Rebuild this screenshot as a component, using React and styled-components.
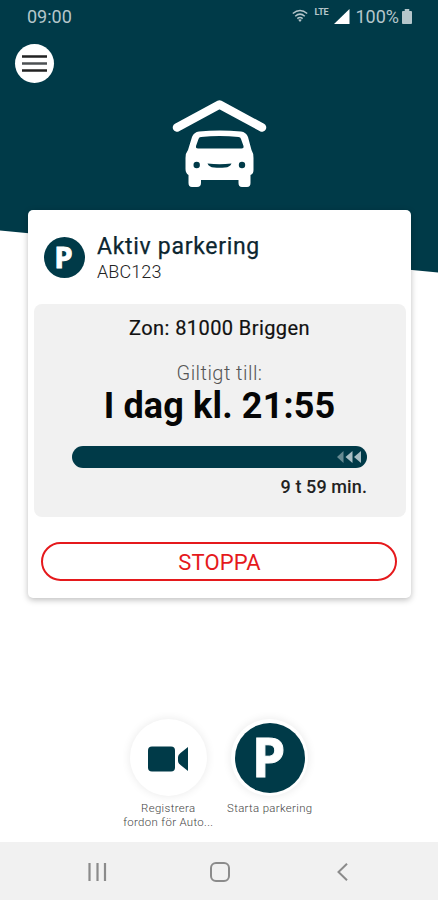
import styled, { createGlobalStyle } from "styled-components";

const GlobalStyle = createGlobalStyle`
    * {
        box-sizing: border-box;
    }
    body {
        margin: 0;
        background: #fff;
        font-family: Roboto, "Liberation Sans", sans-serif;
    }
    svg {
        display: block;
    }
`

const Screen = styled.div`
    display: flex;
    flex-direction: column;
    align-items: center;
    width: 438px;
    height: 900px;
    overflow: hidden;
    background: #fff;
`

const Hero = styled.header`
    flex: none;
    width: 100%;
    height: 273px;
    background: #003a48;
    clip-path: polygon(0 0, 100% 0, 100% 272.5px, 0 230.5px);
`

const StatusBar = styled.div`
    display: flex;
    align-items: center;
    justify-content: space-between;
    height: 32px;
    padding: 0 26px 0 27px;
    color: #b5c6cb;
    font-size: 18px;
`

const StatusIcons = styled.div`
    display: flex;
    align-items: center;
`

const Lte = styled.span`
    margin: -9px 6px 0 7px;
    font-size: 9px;
    font-weight: 700;
    line-height: 10px;
    letter-spacing: -0.2px;
`

const Percent = styled.span`
    margin: 0 3px 0 5px;
`

const MenuButton = styled.button`
    display: flex;
    align-items: center;
    justify-content: center;
    width: 39px;
    height: 39px;
    margin: 12px 0 0 15px;
    padding: 0;
    border: 0;
    border-radius: 50%;
    background: #fff;
`

const CarLogo = styled.svg`
    margin: 15px 0 0 171px;
`

const Card = styled.main`
    flex: none;
    position: relative;
    width: 383px;
    height: 388px;
    margin: -63px 0 0 1px;
    padding: 0 5px 0 6px;
    border-radius: 5px;
    background: #fff;
    box-shadow: 0 2px 6px rgba(0, 0, 0, 0.26);
`

const CardHeader = styled.div`
    display: flex;
    align-items: center;
    gap: 12px;
    height: 94px;
    padding: 0 10px;
`

const Title = styled.h1`
    margin: 1px 0 0;
    color: #0c2630;
    font-size: 23px;
    font-weight: 400;
    line-height: 27px;
    letter-spacing: 0.7px;
    white-space: nowrap;
    -webkit-text-stroke: 0.25px #0c2630;
`

const Plate = styled.p`
    margin: 0;
    color: #222;
    font-size: 18px;
    font-weight: 300;
    line-height: 23px;
    letter-spacing: 0.1px;
`

const Details = styled.section`
    height: 213px;
    padding: 12px 39px 0 38px;
    border-radius: 8px;
    background: #f1f1f1;
    text-align: center;
    white-space: nowrap;
`

const Zone = styled.p`
    margin: 0;
    color: #111;
    font-size: 20px;
    line-height: 24px;
    letter-spacing: 0.42px;
    -webkit-text-stroke: 0.2px #111;
`

const ValidLabel = styled.p`
    margin: 21px 0 0;
    color: #555;
    font-size: 20px;
    font-weight: 300;
    line-height: 24px;
    letter-spacing: 0.45px;
`

const ValidTime = styled.p`
    margin: 0;
    color: #060606;
    font-size: 36px;
    font-weight: 700;
    line-height: 42px;
    letter-spacing: 0.15px;
`

const Progress = styled.div`
    display: flex;
    align-items: center;
    justify-content: flex-end;
    height: 22px;
    margin-top: 19px;
    padding-right: 5px;
    border-radius: 11px;
    background: #003a48;
`

const TimeLeft = styled.p`
    margin: 8px 0 0;
    color: #222;
    font-size: 18px;
    font-weight: 500;
    line-height: 22px;
    letter-spacing: 0.1px;
    text-align: right;
`

const StopButton = styled.button`
    display: block;
    width: 356px;
    height: 39px;
    margin: 25px 0 0 7px;
    padding: 2px 0 0 1px;
    border: 2px solid #e5191c;
    border-radius: 20px;
    background: #fff;
    color: #e5191c;
    font-family: inherit;
    font-size: 22px;
    line-height: 24px;
    letter-spacing: 0.1px;
`

const Actions = styled.div`
    display: flex;
    justify-content: center;
    width: 100%;
    padding-top: 121px;
`

const Action = styled.div`
    display: flex;
    flex-direction: column;
    align-items: center;
    width: 101.5px;
`

const ActionCircle = styled.div`
    display: flex;
    align-items: center;
    justify-content: center;
    width: 77px;
    height: 77px;
    border-radius: 50%;
    background: #fff;
    box-shadow: 0 0 10px rgba(0, 0, 0, 0.09);
`

const CameraIcon = styled.svg`
    margin-top: 3px;
`

const ActionLabel = styled.span`
    margin-top: 5px;
    color: #444;
    font-size: 11.4px;
    font-weight: 300;
    line-height: 14px;
    letter-spacing: 0.35px;
    text-align: center;
    white-space: pre-line;
`

const NavBar = styled.nav`
    display: grid;
    grid-template-columns: repeat(3, 122.5px);
    align-items: center;
    justify-content: center;
    justify-items: center;
    width: 100%;
    height: 58px;
    margin-top: auto;
    padding: 2px 0 0 1px;
    background: #f1f1f1;
`

const ParkingBadge = styled.div`
    display: flex;
    flex: none;
    align-items: center;
    justify-content: center;
    width: ${({ $size }) => $size}px;
    height: ${({ $size }) => $size}px;
    padding: 0 2px 2px 0;
    border-radius: 50%;
    background: #003a48;
    color: #fff;
    font-family: "Noto Sans", sans-serif;
    font-size: ${({ $font }) => $font}px;
    font-weight: 700;
    line-height: 1;
    -webkit-text-stroke: 1px #fff;
`

function Status() {
    return (
        <StatusBar>
            <span>09:00</span>
            <StatusIcons>
                <svg width="16" height="14" viewBox="0 0 16 14" fill="none" stroke="#b5c6cb" strokeWidth="1.5">
                    <path d="M.8 4.5Q8-1.5 15.2 4.5M3.2 7.2Q8 3 12.8 7.2M5.3 9.6Q8 7.3 10.7 9.6" />
                    <path d="M8 13 6.2 10.8Q8 9.5 9.8 10.8Z" fill="#b5c6cb" stroke="none" />
                </svg>
                <Lte>LTE</Lte>
                <svg width="16" height="15" viewBox="0 0 16 15">
                    <path d="M15.5 0V15H0Z" fill="#fff" />
                </svg>
                <Percent>100%</Percent>
                <svg width="10" height="15" viewBox="0 0 11 15" preserveAspectRatio="none">
                    <path d="M3 0H8V2H10Q11 2 11 3V14Q11 15 10 15H1Q0 15 0 14V3Q0 2 1 2H3Z" fill="#b5c6cb" />
                </svg>
            </StatusIcons>
        </StatusBar>
    );
}

function Car() {
    return (
        <CarLogo width="96" height="90" viewBox="171 98 96 90">
            <path d="M177 127.500 219.500 104.500 262 127.500" fill="none" stroke="#fff" strokeWidth="8.500" strokeLinecap="round" strokeLinejoin="round" />
            <path
                d="M199 131.500Q219.500 129.500 241 131.500Q246 132 248 137L251.500 150Q253.500 153 253.500 158V170Q253.500 174 250.500 175V183Q250.500 187 247 187H242Q238.500 187 238.500 183V180H201V183Q201 187 197 187H192Q188.500 187 188.500 183V175Q185.500 173 185.500 169V158Q185.500 153 188 150L192 137Q194 132 199 131.500Z"
                fill="#fff"
            />
            <path d="M201 137Q219.500 135.200 238.500 137Q240.500 137 241 139L243.500 146Q244 148.500 241.500 148.500H198Q195.500 148.500 196 146L198.500 139Q199 137 201 137Z" fill="#003a48" />
            <circle cx="196.700" cy="165" r="3.200" fill="#003a48" />
            <circle cx="242" cy="165" r="3.200" fill="#003a48" />
            <path d="M207.500 163.500Q219.500 165 231.500 163.500Q230 167.200 225 167.500Q219.500 168 214 167.500Q209 167.200 207.500 163.500Z" fill="#003a48" />
        </CarLogo>
    );
}

function App() {
    return (
        <Screen>
            <GlobalStyle />
            <Hero>
                <Status />
                <MenuButton aria-label="Meny">
                    <svg width="25" height="17" viewBox="0 0 25 17">
                        <path d="M0 1.500H25M0 15.500H25" stroke="#222" strokeWidth="2.600" />
                        <path d="M0 8.500H25" stroke="#4c5053" strokeWidth="2.600" />
                    </svg>
                </MenuButton>
                <Car />
            </Hero>
            <Card>
                <CardHeader>
                    <ParkingBadge $size={41} $font={29}>P</ParkingBadge>
                    <div>
                        <Title>Aktiv parkering</Title>
                        <Plate>ABC123</Plate>
                    </div>
                </CardHeader>
                <Details>
                    <Zone>Zon: 81000 Briggen</Zone>
                    <ValidLabel>Giltigt till:</ValidLabel>
                    <ValidTime>I dag kl. 21:55</ValidTime>
                    <Progress>
                        <svg width="26" height="14" viewBox="0 0 26 14">
                            <path d="M7.500 1V13L1 7Z" fill="#668a92" />
                            <path d="M16.500 1V13L9.500 7Z" fill="#a8bec4" />
                            <path d="M25 1V13L18 7Z" fill="#a8bec4" />
                        </svg>
                    </Progress>
                    <TimeLeft>9 t 59 min.</TimeLeft>
                </Details>
                <StopButton>STOPPA</StopButton>
            </Card>
            <Actions>
                <Action>
                    <ActionCircle>
                        <CameraIcon width="42" height="26" viewBox="0 0 42 26">
                            <rect x="1" y="0.500" width="27" height="25" rx="4" fill="#003a48" />
                            <path d="M41 1V25L33.500 19Q31 17 31 15V11Q31 9 33.500 7Z" fill="#003a48" />
                        </CameraIcon>
                    </ActionCircle>
                    <ActionLabel>{'Registrera\nfordon för Auto...'}</ActionLabel>
                </Action>
                <Action>
                    <ActionCircle>
                        <ParkingBadge $size={70} $font={53}>P</ParkingBadge>
                    </ActionCircle>
                    <ActionLabel>Starta parkering</ActionLabel>
                </Action>
            </Actions>
            <NavBar>
                <svg width="19" height="18" viewBox="0 0 19 18" stroke="#8b8b8b" strokeWidth="2.200">
                    <path d="M1.500 0V18M9.500 0V18M17 0V18" />
                </svg>
                <svg width="20" height="20" viewBox="0 0 20 20" fill="none" stroke="#8b8b8b" strokeWidth="2">
                    <rect x="1" y="1" width="18" height="18" rx="5" />
                </svg>
                <svg width="11" height="18" viewBox="0 0 11 18" fill="none" stroke="#8b8b8b" strokeWidth="2">
                    <path d="M10 .7 1.500 9 10 17.300" />
                </svg>
            </NavBar>
        </Screen>
    );
}

export default App
